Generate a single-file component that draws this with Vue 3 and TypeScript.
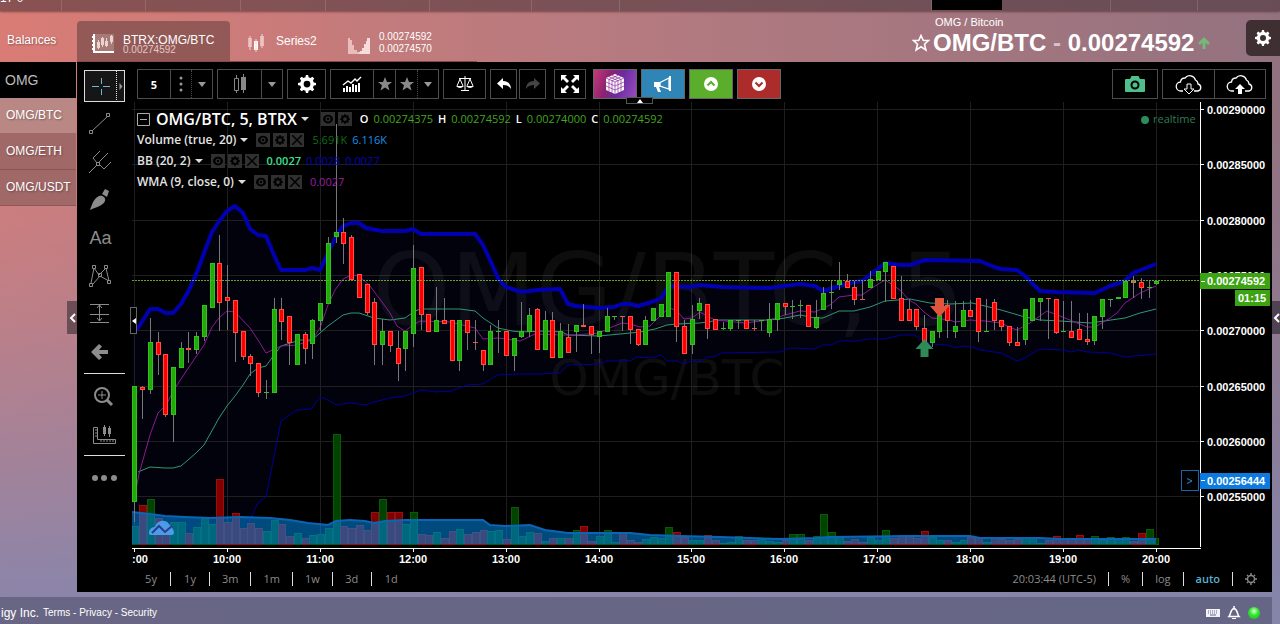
<script setup lang="ts">
type Candle = [high: number, top: number, bottom: number, low: number, tone: 'g' | 'r' | 'b', volume: number, volumeTone: 'g' | 'r']

const step = 7.742
const originX = 134.8
const volumeBase = 544

const rows = `386 386 502 522 g 526 g|386 387 390 419 r 505 r|318 342 390 394 g 499 g|332 342 355 375 r 518 r|354 354 415 417 r 530 r|367 367 415 442 g 522 g|342 348 368 368 g 522 g|332 348 350 363 r 533 r|332 336 350 354 g 527 g|305 305 337 341 g 518 g|263 263 308 308 g 524 g|235 263 303 331 r 479 r
265 297 301 330 r 522 r|300 300 333 362 r 513 r|331 331 357 360 r 528 r|354 356 364 376 r 523 r|363 363 393 397 r 528 r|380 392 392 399 g 531 g|298 309 393 393 g 520 g|298 309 322 340 r 524 r|316 316 343 365 r 536 r|334 334 365 365 g 533 g|332 334 349 364 r 538 r|319 320 344 359 g 535 g
303 303 321 331 g 534 g|237 243 304 304 g 528 g|124 232 237 243 g 434 g|218 232 244 264 r 526 r|235 237 280 280 r 528 r|274 274 298 298 r 525 r|284 284 313 315 r 530 r|298 302 345 365 r 512 r|319 331 345 365 g 499 g|331 331 346 352 r 512 r|331 348 364 381 r 512 r|331 331 349 371 g 524 g
245 268 334 347 g 512 g|267 267 315 330 r 534 r|314 314 332 332 r 535 r|287 320 332 332 g 532 g|298 320 324 324 r 538 r|320 320 361 361 r 531 r|320 320 361 371 g 529 g|320 320 333 350 r 534 r|320 342 342 350 r 532 r|350 350 365 371 r 530 r|325 331 365 365 g 531 g|320 331 331 353 g 530 g
331 331 356 356 r 539 r|338 338 356 371 g 507 g|302 331 337 338 g 536 g|308 315 332 337 g 532 g|308 309 350 350 r 533 r|311 320 350 350 g 541 g|312 320 358 358 r 538 r|323 331 358 358 g 538 g|324 337 353 353 r 538 r|325 325 332 352 g 530 g|304 325 327 327 r 526 r|326 326 335 354 r 541 r
331 331 337 353 g 536 g|308 316 332 332 g 530 g|316 316 316 320 g 542 g|316 316 316 331 r 532 r|316 316 330 344 r 540 r|329 329 345 346 r 542 r|316 320 345 345 g 539 g|308 308 321 321 g 537 g|304 304 317 317 g 538 g|272 272 317 317 g 527 g|272 272 327 342 r 532 r|320 326 354 354 r 537 r
305 319 345 354 g 540 g|298 303 311 319 g 540 g|304 304 329 339 r 535 r|319 319 330 330 r 540 r|322 328 328 330 g 543 g|320 320 329 331 g 542 g|320 320 320 329 g 536 g|320 320 329 329 r 540 r|320 328 328 331 r 540 r|320 320 320 331 g 538 g|303 319 333 337 g 541 g|303 303 320 331 g 542 g
303 303 307 315 r 540 r|300 306 306 319 g 534 g|300 305 305 318 g 534 g|305 305 327 327 r 540 r|300 317 328 329 g 536 g|287 293 310 310 g 514 g|281 292 292 309 g 532 g|262 280 285 290 g 537 g|274 281 288 288 r 541 r|281 287 300 305 r 539 r|281 299 299 300 r 542 r|271 279 288 288 g 537 g
271 271 280 280 g 540 g|262 262 272 302 g 530 g|266 266 299 299 r 538 r|276 298 321 321 r 535 r|299 309 321 321 r 536 r|309 309 327 330 r 538 r|315 328 342 342 r 531 r|331 331 343 347 g 537 g|315 315 332 338 g 540 g|300 305 321 338 r 540 r|301 326 332 338 g 542 g|301 310 327 327 g 540 g
300 310 317 317 r 537 r|298 298 332 342 r 537 r|299 331 331 332 g 542 g|299 302 321 330 r 537 r|320 320 327 331 r 539 r|326 326 343 346 r 540 r|327 342 346 346 r 539 r|309 309 340 345 g 538 g|298 298 321 321 g 538 g|298 298 302 321 g 543 g|298 298 298 339 r 540 r|299 299 333 334 r 536 r
301 331 331 332 g 539 r|301 331 338 338 r 539 r|313 329 340 340 r 535 r|313 339 342 345 r 539 r|316 316 341 345 g 536 g|299 299 317 329 g 540 g|299 299 299 307 g 537 g|297 297 299 299 g 539 g|281 281 298 298 g 537 g|276 280 283 298 b 541 r|278 282 288 299 r 533 r|281 287 287 298 g 529 g|281 281 284 285 g 538 g`

const candles: Candle[] = rows.split(/[|\n]/).map((row) => {
  const [high, top, bottom, low, tone, volume, volumeTone] = row.trim().split(' ')
  return [Number(high), Number(top), Number(bottom), Number(low), tone, Number(volume), volumeTone] as Candle
})

const barX = (index: number): number => Math.floor(originX + index * step)

const upper = '132,331 138,328 150,309 158,309 166,313 173,313 181,304 189,290 197,272 204,253 212,232 220,220 227,211 235,206 243,213 250,229 258,235 266,236 274,255 281,270 305,270 312,268 320,270 328,253 336,236 343,226 351,223 359,223 366,228 382,231 405,231 413,229 421,234 475,234 483,245 491,262 499,280 506,287 521,292 537,290 560,289 568,304 576,306 599,308 614,307 622,304 630,304 638,306 652,302 661,298 669,286 690,287 700,285 723,287 769,288 800,284 815,286 823,291 839,286 854,282 862,281 870,275 885,263 901,265 910,265 925,260 980,261 994,267 1001,269 1017,270 1025,276 1040,291 1056,292 1095,293 1110,286 1125,281 1133,273 1156,264'
const lower = '249,522 258,503 266,497 281,421 297,410 311,409 320,397 328,400 336,405 350,403 366,405 374,402 390,398 405,396 421,390 436,392 452,391 467,385 483,384 491,379 497,375 520,374 540,374 560,373 568,365 600,364 607,361 630,361 637,357 652,358 661,355 667,361 677,361 683,364 692,361 699,362 707,357 714,357 721,353 780,352 791,348 815,349 823,345 831,345 839,341 855,341 870,339 885,339 901,335 914,335 932,344 947,345 955,348 963,346 972,347 980,350 1001,353 1017,361 1025,358 1040,349 1063,350 1071,352 1079,350 1087,352 1110,353 1125,357 1156,354'
const band = `${upper} ${lower.split(' ').reverse().join(' ')} 249,544 132,544`
const basis = '138,472 150,467 165,468 173,468 181,466 196,453 204,445 219,418 227,406 235,396 243,385 250,374 258,368 266,366 274,355 281,346 300,340 312,340 320,333 328,326 343,315 351,313 359,313 374,318 390,320 405,318 415,311 421,309 460,309 475,311 483,318 498,328 512,331 521,332 545,331 562,332 568,335 599,336 620,334 640,332 655,329 667,325 677,324 700,323 720,320 770,320 785,318 800,315 815,318 823,318 839,311 854,311 870,307 885,301 910,299 930,303 950,304 972,303 985,306 1001,310 1025,317 1040,320 1060,321 1090,323 1125,318 1140,313 1156,309'
const wma = '134,500 139,474 150,435 158,413 166,405 175,388 189,367 204,345 212,327 219,318 227,311 235,312 250,328 258,340 266,353 281,346 297,345 312,340 320,328 328,305 335,290 343,279 351,275 359,276 370,286 382,302 390,313 397,326 405,331 413,325 420,321 450,322 475,328 483,339 498,338 520,341 535,334 562,335 575,335 600,333 607,329 622,323 630,324 640,327 650,326 660,316 669,308 676,310 684,319 692,318 700,312 707,316 715,320 745,323 769,320 785,315 800,311 815,312 830,305 839,297 854,295 862,295 875,286 885,280 893,285 901,291 909,300 916,304 924,312 932,318 950,320 955,322 970,320 985,321 1001,323 1009,327 1017,330 1030,323 1047,311 1060,316 1087,327 1095,327 1110,318 1117,313 1125,303 1140,293 1156,286'
const average = '132,512 150,514 165,516 185,517 210,518 240,517 270,518 290,520 308,523 328,525 336,521 350,520 365,521 374,523 385,521 405,520 483,520 490,525 505,526 530,525 545,530 568,533 600,533 630,533 650,535 680,536 720,537 750,538 780,539 815,538 830,537 910,536 970,536 980,538 1040,538 1060,539 1156,539'

const prices = ['0.00290000', '0.00285000', '0.00280000', '0.00275000', '0.00270000', '0.00265000', '0.00260000', '0.00255000']
const priceY = [109, 164, 220, 275, 330, 386, 441, 496]
const hours = [':00', '10:00', '11:00', '12:00', '13:00', '14:00', '15:00', '16:00', '17:00', '18:00', '19:00', '20:00']
const hourX = [134, 227, 320, 413, 506, 599, 691, 784, 877, 970, 1063, 1156]

interface Study { name: string; values: { text: string; tone: string }[] }
const studies: Study[] = [
  { name: 'Volume (true, 20)', values: [{ text: '5.691K', tone: 'dark-green' }, { text: '6.116K', tone: 'sky' }] },
  { name: 'BB (20, 2)', values: [{ text: '0.0027', tone: 'mint' }, { text: '0.0028', tone: 'navy' }, { text: '0.0027', tone: 'navy' }] },
  { name: 'WMA (9, close, 0)', values: [{ text: '0.0027', tone: 'purple' }] },
]
const quote = [['O', '0.00274375'], ['H', '0.00274592'], ['L', '0.00274000'], ['C', '0.00274592']]
const pairs = ['OMG/BTC', 'OMG/ETH', 'OMG/USDT']
const ranges = ['5y', '1y', '3m', '1m', '1w', '3d', '1d']
const gear = 'M7 0h2l.4 2 1.700.7L12.800 1.600l1.600 1.600-1.100 1.700.7 1.700 2 .4v2l-2 .4-.7 1.700 1.100 1.700-1.600 1.600-1.700-1.100-1.700.7L9 16H7l-.4-2-1.700-.7-1.700 1.100-1.600-1.600 1.100-1.700L2 9.400 0 9V7l2-.4.7-1.700L1.600 3.200l1.600-1.600 1.700 1.100L6.600 2zM8 5a3 3 0 1 0 0 6 3 3 0 0 0 0-6z'
const eye = 'M0 8a8 7 0 0 1 16 0A8 7 0 0 1 0 8zm8-4a4 4 0 1 0 0 8 4 4 0 0 0 0-8zm0 2a2 2 0 1 1 0 4 2 2 0 0 1 0-4z'
const star = 'M7 0l2 5h5l-4 3.200 1.500 5.300L7 10.500 2.500 13.500 4 8.200 0 5h5z'
const cloud = 'M8 19H6a4.500 4.500 0 0 1-.5-9A4.500 4.500 0 0 1 10 6a6 6 0 0 1 10.500 2A4.500 4.500 0 0 1 23 12a3.600 3.600 0 0 1 0 7h-4'
</script>

<template>
  <div class="page">
    <div class="strip" aria-hidden="true">
      <span class="strip-text">17 0</span>
      <i class="w61"></i><i class="w84"></i><i class="w95"></i><i class="w85"></i><i class="w104"></i><i class="w102"></i><i class="w88"></i><i class="w313"></i><b></b><i class="w109"></i><i class="w87"></i>
    </div>

    <header class="head">
      <a class="balances" href="#">Balances</a>
      <nav class="tabs">
        <button class="tab active" type="button">
          <svg width="24" height="22" viewBox="0 0 24 22">
            <path d="M4 1h19v17H4z" fill="#fff" opacity=".2" />
            <path d="M3 1v18h20M1 4h3M1 8h3M1 12h3M1 16h3" fill="none" stroke="#fff" stroke-width="2" />
            <path d="M6 9h3v6H6zM10 5h3v7h-3zM14 8h3v5h-3zM19 3h3v6h-3z" fill="#ead2d0" />
            <path d="M7.500 7v9M11.500 4v10M15.500 5v9M20.500 2v9" fill="none" stroke="#ead2d0" />
          </svg>
          <span class="tab-text">BTRX:OMG/BTC<small>0.00274592</small></span>
        </button>
        <button class="tab series" type="button">
          <svg width="18" height="18" viewBox="0 0 18 18"><path d="M1 4h4v9H1z" fill="#e6b7b5" /><path d="M7 7h4v9H7z" fill="#fff" /><path d="M13 2h4v10h-4z" fill="#e6b7b5" /><path d="M3 2v14M9 5v13M15 0v14" stroke="#f3d5d3" fill="none" /></svg>
          Series2
        </button>
        <button class="tab depth" type="button">
          <svg width="22" height="18" viewBox="0 0 22 18"><path d="M0 2h2v2h2v5h2v5h3v2h2v2H0z" fill="#e8bdbb" /><path d="M22 2h-3v3h-1v3h-2v4h-2v3h-2v1h-1v2h11z" fill="#f6dcda" /></svg>
          <span>0.00274592<br />0.00274570</span>
        </button>
      </nav>
      <div class="title">
        <small>OMG / Bitcoin</small>
        <h1>
          <svg width="18" height="18" viewBox="0 0 18 18"><path d="M9 1.500l2.300 5h5.200l-4 3.700 1.400 5.800L9 12.800 4.100 16l1.400-5.800-4-3.700h5.200z" fill="none" stroke="#fff" stroke-width="1.600" /></svg>
          <span>OMG/BTC <em>-</em> 0.00274592</span>
          <svg width="14" height="14" viewBox="0 0 14 14"><path d="M7 1l6 6-2 2-2.500-2.500V13h-3V6.500L3 9 1 7z" fill="#76b877" /></svg>
        </h1>
      </div>
      <button class="settings" type="button" aria-label="Settings">
        <svg width="16" height="16" viewBox="0 0 16 16"><path :d="gear" fill="#fff" fill-rule="evenodd" /></svg>
      </button>
    </header>

    <div class="main">
      <aside class="side">
        <input type="text" value="OMG" aria-label="Filter symbols" />
        <a v-for="pair in pairs" :key="pair" href="#">{{ pair }}</a>
        <button class="handle" type="button" aria-label="Collapse left panel"><svg width="7" height="10" viewBox="0 0 7 10"><path d="M6 1L2 5l4 4" fill="none" stroke="#fff" stroke-width="2" /></svg></button>
      </aside>

      <section class="panel">
        <div class="tools">
          <button class="cross" type="button" aria-label="Crosshair">
            <svg width="40" height="30" viewBox="0 0 40 30"><path d="M7 15.500h7M18 15.500h7M16.500 7v6M16.500 18v6" stroke="#69b9d3" /><path d="M31.500 0v30" stroke="#e6e6e6" stroke-dasharray="1 1" /><path d="M34.500 12l3 3.500-3 3.500z" fill="#999" /></svg>
          </button>
          <button type="button" aria-label="Trend line"><svg width="26" height="26" viewBox="0 0 26 26"><path d="M4 20L20 5M1.500 19.500h3v3h-3zM18.500 2.500h3v3h-3z" /></svg></button>
          <button type="button" aria-label="Pitchfork"><svg width="26" height="26" viewBox="0 0 26 26"><path d="M1 24l8-8M11 13l9-9M5 9l7-7M5 9l4 5M12 16l4 4M16 20l7-7M8.500 13.500h3v3h-3z" /></svg></button>
          <button type="button" aria-label="Brush"><svg width="26" height="26" viewBox="0 0 26 26"><path class="solid" d="M2 23c2-5 3-11 9-14 4-1 7 2 6 5-2 5-9 6-15 9zM14 7l3-5 4 2-2 6z" /></svg></button>
          <button class="letters" type="button">Aa</button>
          <button type="button" aria-label="Pattern"><svg width="26" height="26" viewBox="0 0 26 26"><path d="M3 20L6 5l5 7 7-7 3 13M5 21l7-8 9 5M1.500 20.500h3v3h-3zM4.500 2.500h3v3h-3zM10.500 10.500h3v3h-3zM16.500 2.500h3v3h-3zM19.500 17.500h3v3h-3z" /></svg></button>
          <button type="button" aria-label="Projection"><svg width="26" height="26" viewBox="0 0 26 26"><path d="M2 3.500h19M2 13.500h19M2 21.500h19M11.500 4v16M9 7l2.500-3L14 7M9 17l2.500 3 2.500-3" /></svg></button>
          <button type="button" aria-label="Back"><svg width="26" height="26" viewBox="0 0 26 26"><path class="solid" d="M11 5l3 2.500-3 3.500h9v4h-9l3 3.500-3 2.500-8-8z" /></svg></button>
          <hr />
          <button class="wide" type="button" aria-label="Zoom"><svg width="26" height="26" viewBox="0 0 26 26"><g><circle cx="11" cy="12" r="7" stroke-width="2" /><path d="M11 8v8M7 12h8" /><path class="thick" d="M16 17l5 5" /></g></svg></button>
          <button class="wide" type="button" aria-label="Measure"><svg width="26" height="26" viewBox="0 0 26 26"><path d="M2.500 6.500h4v12h18v4h-22zM4 9h2M4 12h2M4 15h2M10 19v2M13 19v2M16 19v2M19 19v2M22 19v2M13.500 4v11M18.500 5v11" /><path class="solid" d="M12 6h3v7h-3zM17 7h3v6h-3z" /></svg></button>
          <hr />
          <button class="wide" type="button" aria-label="More"><svg width="26" height="26" viewBox="0 0 26 26"><g class="solid"><circle cx="4" cy="13" r="3" /><circle cx="13" cy="13" r="3" /><circle cx="23" cy="13" r="3" /></g></svg></button>
        </div>

        <div class="work">
          <div class="toolbar">
            <div class="group"><button class="b32 five" type="button">5</button><button class="b21" type="button" aria-label="Intervals"><svg width="4" height="16" viewBox="0 0 4 16"><circle cx="2" cy="2" r="1.500" fill="#999" /><circle cx="2" cy="8" r="1.500" fill="#999" /><circle cx="2" cy="14" r="1.500" fill="#999" /></svg></button><button class="b21 dotted" type="button" aria-label="More intervals"><i class="caret"></i></button></div>
            <div class="group"><button class="b43" type="button" aria-label="Candles"><svg width="14" height="20" viewBox="0 0 14 20"><path d="M1.500 4.500h4v12h-4zM3.500 1v3M3.500 17v2" fill="none" stroke="#888" /><path d="M8 3h5v13H8zM10 0h1v19h-1z" fill="#888" /></svg></button><button class="b21" type="button" aria-label="Chart styles"><i class="caret"></i></button></div>
            <div class="group"><button class="b37" type="button" aria-label="Properties"><svg width="18" height="18" viewBox="0 0 16 16"><path :d="gear" fill="#fff" fill-rule="evenodd" /></svg></button></div>
            <div class="group"><button class="b42" type="button" aria-label="Indicators"><svg width="20" height="16" viewBox="0 0 20 16"><path d="M1 12h2v4H1zM4 10h2v6H4zM7 11h2v5H7zM10 8h2v8h-2zM13 9h2v7h-2zM16 7h2v9h-2z" fill="#fff" /><path d="M1 9l5-4 3 2 4-4 2 2 4-4" fill="none" stroke="#fff" stroke-width="1.400" /></svg></button><button class="b22" type="button" aria-label="Favourite one"><svg width="14" height="14" viewBox="0 0 14 14"><path :d="star" fill="#888" /></svg></button><button class="b22" type="button" aria-label="Favourite two"><svg width="14" height="14" viewBox="0 0 14 14"><path :d="star" fill="#888" /></svg></button><button class="b21 dotted" type="button" aria-label="More indicators"><i class="caret"></i></button></div>
            <div class="group"><button class="b41" type="button" aria-label="Compare"><svg width="18" height="16" viewBox="0 0 18 16"><path d="M9 0v14M3 2.500h12M5 14.500h8M1 10l3-7 3 7M11 10l3-7 3 7" fill="none" stroke="#fff" /><path d="M0 10h8q-4 4-8 0zM10 10h8q-4 4-8 0z" fill="#fff" /></svg></button></div>
            <div class="undo">
              <div class="group"><button class="b25" type="button" aria-label="Undo"><svg width="16" height="14" viewBox="0 0 16 14"><path d="M7 1v3c5 0 8 3 8 8-2-3-4-4-8-4v4L1 6.500z" fill="#fff" /></svg></button></div>
              <div class="group"><button class="b25" type="button" aria-label="Redo"><svg width="16" height="14" viewBox="0 0 16 14"><path d="M9 1v3c-5 0-8 3-8 8 2-3 4-4 8-4v4l6-5.500z" fill="#444" /></svg></button></div>
            </div>
            <div class="group full"><button class="b30" type="button" aria-label="Fullscreen"><svg width="18" height="18" viewBox="0 0 18 18"><path d="M0 0h6L4 2l4 4-2 2-4-4-2 2zM18 0v6l-2-2-4 4-2-2 4-4-2-2zM0 18v-6l2 2 4-4 2 2-4 4 2 2zM18 18h-6l2-2-4-4 2-2 4 4 2-2z" fill="#fff" /></svg></button></div>
            <div class="group cube"><button class="b42" type="button" aria-label="Layouts"><svg width="20" height="22" viewBox="0 0 20 22"><path d="M10 1l9 4v12l-9 4-9-4V5z" fill="#fff" /><path d="M1 5l9 4 9-4M10 9v12M4 3.700l9 4M7 2.400l9 4M13 2.400l-9 4M16 3.700l-9 4M1 9l9 4 9-4M1 13l9 4 9-4M4 6.300v12M7 7.700v12M13 7.700v12M16 6.300v12" fill="none" stroke="#8a2a9a" stroke-width=".7" /></svg></button></div>
            <div class="group blue"><button class="b42" type="button" aria-label="Alerts"><svg width="18" height="16" viewBox="0 0 18 16"><path d="M0 6h6v5H5l2 5H4l-2-5H0z" fill="#fff" /><path d="M6 6.500L15 2v11l-9-3z" fill="none" stroke="#fff" stroke-width="1.300" /><path d="M15 0h2v15h-2z" fill="#fff" /></svg></button></div>
            <div class="group green"><button class="b42" type="button" aria-label="Buy"><svg width="14" height="14" viewBox="0 0 14 14"><circle cx="7" cy="7" r="7" fill="#fff" /><path d="M3.500 8.500L7 5l3.500 3.500" fill="none" stroke="#5aae2c" stroke-width="2" /></svg></button></div>
            <div class="group red"><button class="b42" type="button" aria-label="Sell"><svg width="14" height="14" viewBox="0 0 14 14"><circle cx="7" cy="7" r="7" fill="#fff" /><path d="M3.500 5.500L7 9l3.500-3.500" fill="none" stroke="#ac2b2b" stroke-width="2" /></svg></button></div>
            <div class="group camera"><button class="b44" type="button" aria-label="Snapshot"><svg width="20" height="16" viewBox="0 0 20 16"><path d="M0 4q0-1 1-1h4l1-2q0-1 1-1h6q1 0 1 1l1 2h4q1 0 1 1v11q0 1-1 1H1q-1 0-1-1z" fill="#4fc08d" /><circle cx="10" cy="9" r="3.500" fill="none" stroke="#000" stroke-width="2" /></svg></button></div>
            <div class="group"><button class="b51" type="button" aria-label="Load"><svg width="28" height="24" viewBox="0 0 28 24"><path :d="cloud" fill="none" stroke="#fff" stroke-width="1.300" /><path d="M12 12h4v5h3l-5 5-5-5h3z" fill="#000" stroke="#fff" /></svg></button><button class="b51" type="button" aria-label="Save"><svg width="28" height="24" viewBox="0 0 28 24"><path :d="cloud" fill="none" stroke="#fff" stroke-width="1.300" /><path d="M12 22v-5H9l5-5 5 5h-3v5z" fill="#fff" /></svg></button></div>
            <button class="fold" type="button" aria-label="Hide toolbar"><svg width="6" height="4" viewBox="0 0 6 4"><path d="M0 4l3-4 3 4z" fill="#fff" /></svg></button>
          </div>

          <div class="chart">
            <svg class="plot" viewBox="132 102 1140 468" role="img" aria-label="OMG/BTC five minute chart">
              <polygon :points="band" fill="#02020d" />
              <g class="grid">
                <path v-for="y in priceY" :key="`h${y}`" :d="`M132 ${y + 0.5}H1199`" />
                <path v-for="x in hourX" :key="`v${x}`" :d="`M${x + 0.5} 102V544`" />
              </g>
              <g class="watermark">
                <text x="668" y="325" font-size="99">OMG/BTC, 5</text>
                <text x="667" y="395" font-size="50">OMG/BTC</text>
              </g>
              <polyline :points="lower" class="lower" />
              <g class="volume">
                <rect v-for="(c, i) in candles" :key="`b${i}`" :class="c[6]" :x="barX(i) - (i ? 2.5 : 1.5)" :y="c[5] + 0.5" :width="i === 132 ? 5 : i ? 7 : 6" :height="volumeBase - c[5]" />
              </g>
              <polygon :points="`${average} 1156,544 132,544`" fill="#0086e6" fill-opacity=".55" />
              <polyline :points="average" class="average" />
              <polyline :points="upper" class="upper" />
              <polyline :points="basis" class="basis" />
              <polyline :points="wma" class="wma" />
              <g v-for="(c, i) in candles" :key="i" :class="['candle', c[4]]">
                <path class="wick" :d="`M${barX(i) + 0.5} ${c[0]}V${c[3]}`" />
                <rect v-if="c[2] - c[1] > 1" :x="barX(i) - 1.5" :y="c[1] + 0.5" width="4" :height="c[2] - c[1] - 1" />
                <path v-else class="tick" :d="`M${barX(i) - 2} ${c[1] + 0.5}h5`" />
              </g>
              <path d="M132 280.500H1199" stroke="#67a52b" stroke-dasharray="2 1" />
              <path d="M924.500 339l9 10h-5v8h-8v-8h-5z" fill="#2e8b57" />
              <path d="M935 298h9v8h5l-9.500 11-9.500-11h5z" fill="#e0563c" />
              <g fill="#4a9be8"><path d="M149 533c0-4 3-6 6-6 1-6 10-9 14-3 2 3 5 5 5 9 0 2-2 2-4 2h-18c-2 0-3 0-3-2z" /><path d="M152 533l7-7 6 6 7-6" fill="none" stroke="#2a3d8c" stroke-width="2" /></g>

              <g class="axis">
                <path d="M1200.500 102V547M132 548.500H1201" />
                <path v-for="y in priceY" :key="`t${y}`" :d="`M1201 ${y + 0.5}h3`" />
                <path v-for="x in hourX" :key="`u${x}`" :d="`M${x + 0.5} 548v4`" />
                <text v-for="(p, i) in prices" :key="p" x="1207" :y="priceY[i] + 5">{{ p }}</text>
                <text v-for="(h, i) in hours" :key="h" :x="i ? hourX[i] : 140" y="563" text-anchor="middle">{{ h }}</text>
              </g>
              <g class="tags">
                <path d="M1200 273h70v16h-70zM1235 290h35v16h-35z" fill="#3ca313" />
                <path d="M1200 473h70v16h-70z" fill="#0b7be0" />
                <path d="M1201 281.500h4M1201 480.500h4" stroke="#fff" />
                <text x="1207" y="285">0.00274592</text>
                <text x="1238" y="302">01:15</text>
                <text x="1207" y="485">0.00256444</text>
                <rect x="1181.500" y="470.500" width="17" height="20" fill="#000" stroke="#1565b0" />
                <path d="M1187 478.500l5 2.500-5 2.500" fill="none" stroke="#2b8ae0" />
              </g>
              <circle cx="1145" cy="120" r="4" fill="#2e8b5c" />
              <text class="realtime" x="1153" y="123">realtime</text>
            </svg>

            <div class="legend">
              <div class="row symbol">
                <svg width="13" height="13" viewBox="0 0 13 13"><path d="M.5 .500h12v12H.500zM3 6.500h7" fill="none" stroke="#aaa" /></svg>
                <strong>OMG/BTC, 5, BTRX</strong><i class="caret light"></i>
                <span class="minis"><button type="button" aria-label="Show symbol"><svg width="10" height="10" viewBox="0 0 16 16"><path :d="eye" fill-rule="evenodd" /></svg></button><button type="button" aria-label="Format symbol"><svg width="10" height="10" viewBox="0 0 16 16"><path :d="gear" fill-rule="evenodd" /></svg></button></span>
                <span class="ohlc"><template v-for="[label, price] in quote" :key="label"><b>{{ label }}</b><span>{{ price }}</span></template></span>
              </div>
              <div v-for="study in studies" :key="study.name" class="row">
                <span class="name">{{ study.name }}</span><i class="caret light"></i>
                <span class="minis">
                  <button type="button" :aria-label="`Show ${study.name}`"><svg width="10" height="10" viewBox="0 0 16 16"><path :d="eye" fill-rule="evenodd" /></svg></button>
                  <button type="button" :aria-label="`Format ${study.name}`"><svg width="10" height="10" viewBox="0 0 16 16"><path :d="gear" fill-rule="evenodd" /></svg></button>
                  <button type="button" :aria-label="`Remove ${study.name}`"><svg width="10" height="10" viewBox="0 0 10 10"><path d="M0 0l10 10M10 0L0 10" stroke="#000" stroke-width="1.500" /></svg></button>
                </span>
                <span v-for="(value, i) in study.values" :key="i" :class="['value', value.tone]">{{ value.text }}</span>
              </div>
            </div>
            <button class="fold-left" type="button" aria-label="Hide drawing tools"><svg width="4" height="6" viewBox="0 0 4 6"><path d="M4 0v6L0 3z" fill="#fff" /></svg></button>
          </div>

          <div class="bottom">
            <div class="ranges"><button v-for="range in ranges" :key="range" type="button">{{ range }}</button></div>
            <div class="scales">
              <button type="button">20:03:44 (UTC-5)</button><button type="button">%</button><button type="button">log</button><button class="on" type="button">auto</button>
              <button type="button" aria-label="Scale settings"><svg width="12" height="12" viewBox="0 0 12 12"><circle cx="6" cy="6" r="3.500" fill="none" stroke="#888" stroke-width="1.500" /><path d="M6 0v2M6 10v2M0 6h2M10 6h2M2 2l1 1M9 9l1 1M10 2L9 3M3 9l-1 1" stroke="#888" stroke-width="1.500" /></svg></button>
            </div>
          </div>
        </div>
      </section>

      <aside class="edge"><button class="handle" type="button" aria-label="Expand right panel"><svg width="7" height="10" viewBox="0 0 7 10"><path d="M6 1L2 5l4 4" fill="none" stroke="#fff" stroke-width="2" /></svg></button></aside>
    </div>

    <footer class="foot">
      <div class="legal"><span>igy Inc.</span><p><a href="#">Terms</a> - <a href="#">Privacy</a> - <a href="#">Security</a></p></div>
      <div class="status">
        <svg width="14" height="8" viewBox="0 0 14 8"><path d="M0 0h14v8H0z" fill="#f4f4f8" /><path d="M2 2h10M2 4h10" stroke="#606488" stroke-dasharray="1 1" /><path d="M4 6h6" stroke="#606488" /></svg>
        <svg width="14" height="14" viewBox="0 0 14 14"><path d="M2 10.500c2-2 1-7 5-8 4 1 3 6 5 8zM7 0v2" fill="none" stroke="#fff" stroke-width="1.500" /><path d="M5 12h4v1H5z" fill="#fff" /></svg>
        <i class="lamp"></i>
      </div>
    </footer>
  </div>
</template>

<style>
body { margin: 0; overflow: hidden; }
</style>

<style scoped>
.page, .page * { box-sizing: border-box; }
.page {
  min-height: 100vh;
  display: flex;
  flex-direction: column;
  overflow: hidden;
  color: #fff;
  font-family: "Liberation Sans", Arial, sans-serif;
  background:
    linear-gradient(to bottom, rgba(132, 134, 174, 0) 18%, rgba(132, 134, 174, .32) 50%, rgba(132, 134, 174, .9) 94%),
    linear-gradient(to right, #d97c75, #b47a80 50%, #93727f);
}
button { font: inherit; color: inherit; border: 0; padding: 0; margin: 0; background: none; display: flex; align-items: center; justify-content: center; }
a { color: inherit; text-decoration: none; }
svg { flex: none; display: block; }

.strip { height: 11px; display: flex; position: relative; overflow: hidden; flex: none; background: rgba(65, 45, 50, .52); box-shadow: 0 1px 2px rgba(60, 20, 20, .5); }
.strip-text { position: absolute; left: 0; top: -8px; font-size: 12px; line-height: 12px; }
.strip i { border-right: 1px solid rgba(255, 255, 255, .13); flex: none; }
.strip b { width: 70px; background: #000; flex: none; height: 10px; }
.w61 { width: 62px; } .w84 { width: 84px; } .w95 { width: 95px; } .w85 { width: 85px; } .w104 { width: 104px; } .w102 { width: 102px; } .w88 { width: 88px; } .w313 { width: 312px; } .w109 { width: 109px; } .w87 { width: 87px; }

.head { height: 51px; flex: none; display: flex; font-size: 12px; text-shadow: 1px 1px 2px rgba(0, 0, 0, .35); }
.balances { width: 77px; padding: 22px 0 0 7px; line-height: 14px; }
.tabs { display: flex; padding-top: 10px; width: 400px; border-bottom: 1px solid rgba(90, 40, 40, .6); }
.tab { height: 40px; gap: 8px; justify-content: flex-start; }
.tab.active { width: 153px; padding-left: 14px; background: #925956; border-radius: 4px 4px 0 0; }
.tab.active svg { margin-top: 5px; }
.tab-text { text-align: left; line-height: 12px; padding-top: 5px; }
.tab small { display: block; font-size: 10px; line-height: 8px; color: #e2c9c8; }
.series { padding-left: 17px; gap: 11px; width: 118px; }
.series svg { margin-top: 4px; }
.depth { font-size: 10px; line-height: 12px; text-align: left; gap: 9px; padding-top: 4px; }
.depth svg { margin-top: 4px; }
.title { margin-left: auto; width: 300px; padding-top: 5px; text-shadow: none; }
.title small { display: block; font-size: 11px; line-height: 12px; padding-left: 23px; }
.title h1 { margin: 0; display: flex; align-items: center; gap: 3px; font-size: 24px; line-height: 30px; white-space: nowrap; }
.title em { font-style: normal; color: #d9c3c8; }
.settings { width: 34px; height: 36px; margin: 9px 0 0 34px; background: #3f2f33; border-radius: 5px 0 0 5px; }

.main { display: flex; flex: none; }
.side { width: 77px; flex: none; position: relative; display: flex; flex-direction: column; }
.side input { width: 76px; height: 36px; border: 0; padding: 0 0 0 5px; background: #000; color: #bbb; font: 14px "Liberation Sans", Arial, sans-serif; }
.side a { width: 76px; height: 36px; padding-left: 6px; font-size: 12px; line-height: 35px; background: #a16868; border-bottom: 1px solid #8c5658; text-shadow: 1px 1px 2px rgba(0, 0, 0, .35); }
.side input + a { background: #b98884; border-bottom-color: #a16868; }
.handle { position: absolute; width: 10px; height: 33px; top: 239px; right: 0; background: #6a4d55; }
.edge { width: 8px; flex: none; position: relative; }
.edge .handle { width: 8px; background: #4f4353; }

.panel { flex: 1; min-width: 0; display: flex; background: #000; }
.tools { width: 55px; flex: none; padding: 8px 0 0 7px; }
.tools button { width: 33px; height: 38px; }
.tools .wide { width: 40px; }
.tools .cross { width: 41px; height: 32px; border: 1px solid #ddd; background: #161616; margin-bottom: 3px; }
.tools button:not(.cross) path, .tools circle { fill: none; stroke: #8c8c8c; }
.tools button:not(.cross) .solid, .tools .solid circle { fill: #8c8c8c; stroke: none; }
.tools .thick { stroke-width: 3; }
.tools .letters { font-size: 18px; color: #8c8c8c; }
.tools hr { width: 41px; height: 1px; border: 0; background: #ddd; margin: 2px 0 3px; }

.work { flex: 1; min-width: 0; }
.toolbar { height: 40px; display: flex; align-items: flex-start; gap: 4px; padding: 7px 6px 0 5px; position: relative; }
.group { display: flex; border: 1px solid #4c4c4c; height: 30px; flex: none; }
.group button { height: 28px; }
.group button + button { border-left: 1px solid #4c4c4c; }
.group button + .dotted { border-left-style: dotted; }
.undo { display: flex; gap: 2px; }
.b21 { width: 21px; } .b22 { width: 22px; } .b25 { width: 25px; } .b30 { width: 30px; } .b32 { width: 32px; } .b37 { width: 37px; } .b41 { width: 41px; } .b42 { width: 42px; } .b43 { width: 43px; } .b44 { width: 44px; } .b51 { width: 51px; }
.five { font: 700 11px "Open Sans", sans-serif; }
.full { margin: 0 3px 0 4px; }
.cube { background: linear-gradient(110deg, #c53a78, #8b2270 35%, #6a2ca0 60%, #9b4bc0); border-color: #666; }
.blue { background: #2f85b5; border-color: #666; }
.green { background: #5aae2c; border-color: #666; }
.red { background: #ac2b2b; border-color: #666; }
.camera { margin-left: auto; }
.caret { border: 4px solid transparent; border-top: 5px solid #999; border-bottom: 0; }
.caret.light { border-width: 4px 4px 0; border-top-color: #ddd; }
.fold { position: absolute; left: 494px; top: 35px; width: 27px; height: 7px; border: 1px solid #555; background: #000; z-index: 2; }

.chart { position: relative; }
.plot { width: 100%; height: auto; }
.grid path { stroke: #1f1f1f; }
.watermark { fill: #fff; fill-opacity: .05; font-family: "DejaVu Sans", sans-serif; text-anchor: middle; }
polyline { fill: none; }
.lower { stroke: #00009c; }
.upper { stroke: #0000b0; stroke-width: 4; stroke-linejoin: round; }
.basis { stroke: #2e9870; }
.wma { stroke: #8a1a94; }
.average { stroke: #0a66b4; stroke-width: 2; }
.volume .g { fill: #004400; stroke: #0b5a0b; }
.volume .r { fill: #800000; stroke: #981010; }
.candle .wick { stroke: #777; }
.candle rect, .tick { fill: #22a80a; stroke: #2fc41c; }
.candle.r rect, .candle.r .tick { fill: #f00; stroke: #ff4d48; }
.candle.b rect { fill: #b8704e; stroke: #c08058; }
.axis path { stroke: #fff; }
.axis text, .tags text { fill: #fff; font: 700 11px "Liberation Sans", Arial, sans-serif; }
.realtime { fill: #2e7d55; font: 11px "Open Sans", sans-serif; }

.legend { position: absolute; left: 5px; top: 7px; font: 11px/20px "Open Sans", "Noto Sans", sans-serif; }
.row { display: flex; align-items: center; height: 21px; white-space: nowrap; }
.row.symbol { height: 20px; }
.symbol strong { font-size: 16px; font-weight: 600; margin-left: 6px; }
.name { font-size: 12px; font-weight: 600; color: #e4e4e4; }
.row .caret { margin-left: 4px; }
.minis { display: flex; gap: 3px; margin: 0 8px 0 8px; }
.symbol .minis { margin-left: 12px; }
.minis button { width: 14px; height: 14px; background: #303030; }
.ohlc { color: #42a61f; display: flex; gap: 5px; }
.ohlc b { color: #fff; font-weight: 600; }
.value { margin-right: 5px; }
.dark-green { color: #0c7014; } .sky { color: #1590e8; } .mint { color: #3ee08f; font-weight: 600; } .navy { color: #0606b8; } .purple { color: #98209e; }
.fold-left { position: absolute; left: -2px; top: 205px; width: 7px; height: 27px; border: 1px solid #666; background: #000; }

.bottom { height: 22px; display: flex; justify-content: space-between; color: #8c8c8c; font: 11px/14px "Open Sans", sans-serif; padding-bottom: 4px; }
.ranges, .scales { display: flex; align-items: center; }
.scales { padding-right: 3px; }
.bottom button { height: 14px; min-width: 33px; padding: 0 12px; border-right: 1px solid #ddd; }
.ranges button { min-width: 39px; }
.bottom button:last-child { border-right: 0; }
.bottom .on { color: #58b2d0; font-weight: 600; }

.foot { flex: 1; min-height: 27px; margin: 5px 8px 0 0; display: flex; justify-content: space-between; align-items: center; background: rgba(62, 65, 88, .45); font-size: 10px; }
.legal { display: flex; align-items: center; gap: 4px; line-height: 14px; padding: 4px 0 0 1px; }
.legal p { margin: 0; }
.legal span { font-size: 12px; }
.status { display: flex; align-items: center; gap: 7px; padding: 4px 12px 0 0; }
.lamp { width: 12px; height: 12px; border-radius: 50%; background: radial-gradient(circle at 50% 35%, #d6ffd0, #2ee62a 45%, #1bb81b); }
</style>
